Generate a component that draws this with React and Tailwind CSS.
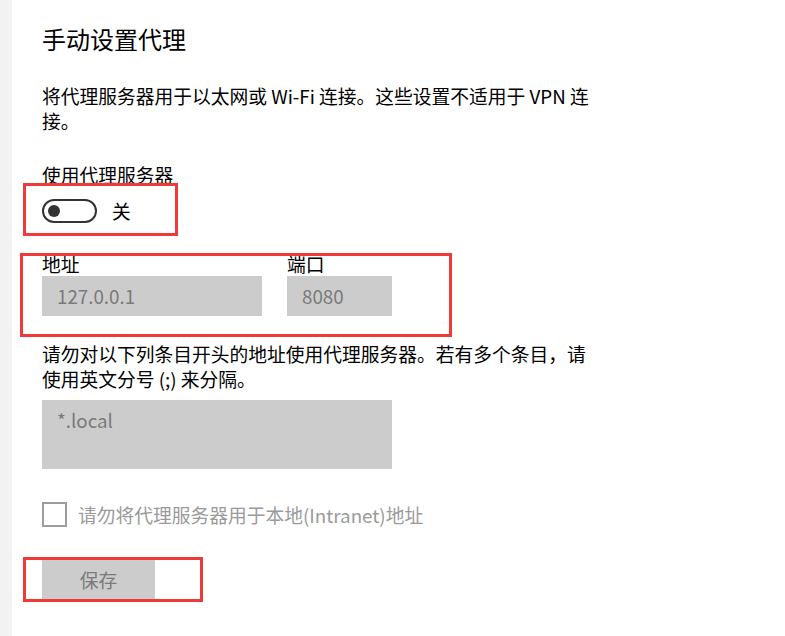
export default function App() {
  return (
    <div className="flex min-h-[636px] w-[785px] bg-white text-black font-['Segoe_UI','Noto_Sans_CJK_SC',sans-serif]">
      {/* left pane edge */}
      <div className="w-[12px] shrink-0 bg-[#f2f2f2]" />

      <div className="flex flex-col pl-[30px] pt-[23px]">
        <h1 className="text-[24px] leading-[32px]">手动设置代理</h1>

        <p className="mt-[28px] w-[558px] text-[18.75px] leading-[25px]">
          将代理服务器用于以太网或 Wi-Fi 连接。这些设置不适用于 VPN 连接。
        </p>

        <div className="mt-[29px] text-[18.75px] leading-[25px]">使用代理服务器</div>

        {/* toggle */}
        <div className="relative mt-[12px] flex items-center gap-[15px]">
          <div className="flex h-[24px] w-[55px] items-center rounded-full border-2 border-[#333] pl-[4px]">
            <div className="h-[12px] w-[12px] rounded-full bg-[#333]" />
          </div>
          <span className="text-[18.75px] leading-[24px]">关</span>
          <div className="pointer-events-none absolute left-[-19px] top-[-16px] h-[53px] w-[155px] border-[3px] border-[#f03a3a]" />
        </div>

        {/* address / port */}
        <div className="relative mt-[29px] flex gap-[25px]">
          <div className="flex flex-col">
            <label className="text-[18.75px] leading-[24px]">地址</label>
            <div className="flex h-[40px] w-[220px] items-center bg-[#cccccc] pl-[15px] text-[18.75px] text-[#7a7a7a]">127.0.0.1</div>
          </div>
          <div className="flex flex-col">
            <label className="text-[18.75px] leading-[24px]">端口</label>
            <div className="flex h-[40px] w-[105px] items-center bg-[#cccccc] pl-[15px] text-[18.75px] text-[#7a7a7a]">8080</div>
          </div>
          <div className="pointer-events-none absolute left-[-22px] top-[1px] h-[84px] w-[432px] border-[3px] border-[#f03a3a]" />
        </div>

        <p className="mt-[25px] w-[558px] text-[18.75px] leading-[25px]">
          请勿对以下列条目开头的地址使用代理服务器。若有多个条目，请使用英文分号 (;) 来分隔。
        </p>

        <div className="mt-[9px] h-[69px] w-[350px] bg-[#cccccc] pl-[15px] pt-[7px] text-[18.75px] leading-[25px] text-[#7a7a7a]">
          *.local
        </div>

        {/* checkbox */}
        <div className="mt-[33px] flex items-center gap-[11px]">
          <div className="h-[25px] w-[25px] border-[2.5px] border-[#9d9d9d]" />
          <span className="text-[18.75px] leading-[25px] text-[#9a9a9a]">请勿将代理服务器用于本地(Intranet)地址</span>
        </div>

        {/* save */}
        <div className="relative mt-[33px]">
          <button className="flex h-[40px] w-[113px] items-center justify-center bg-[#cccccc] text-[18.75px] text-[#7a7a7a]">保存</button>
          <div className="pointer-events-none absolute left-[-19px] top-[-3px] h-[45px] w-[180px] border-[3px] border-[#f03a3a]" />
        </div>
      </div>
    </div>
  );
}
